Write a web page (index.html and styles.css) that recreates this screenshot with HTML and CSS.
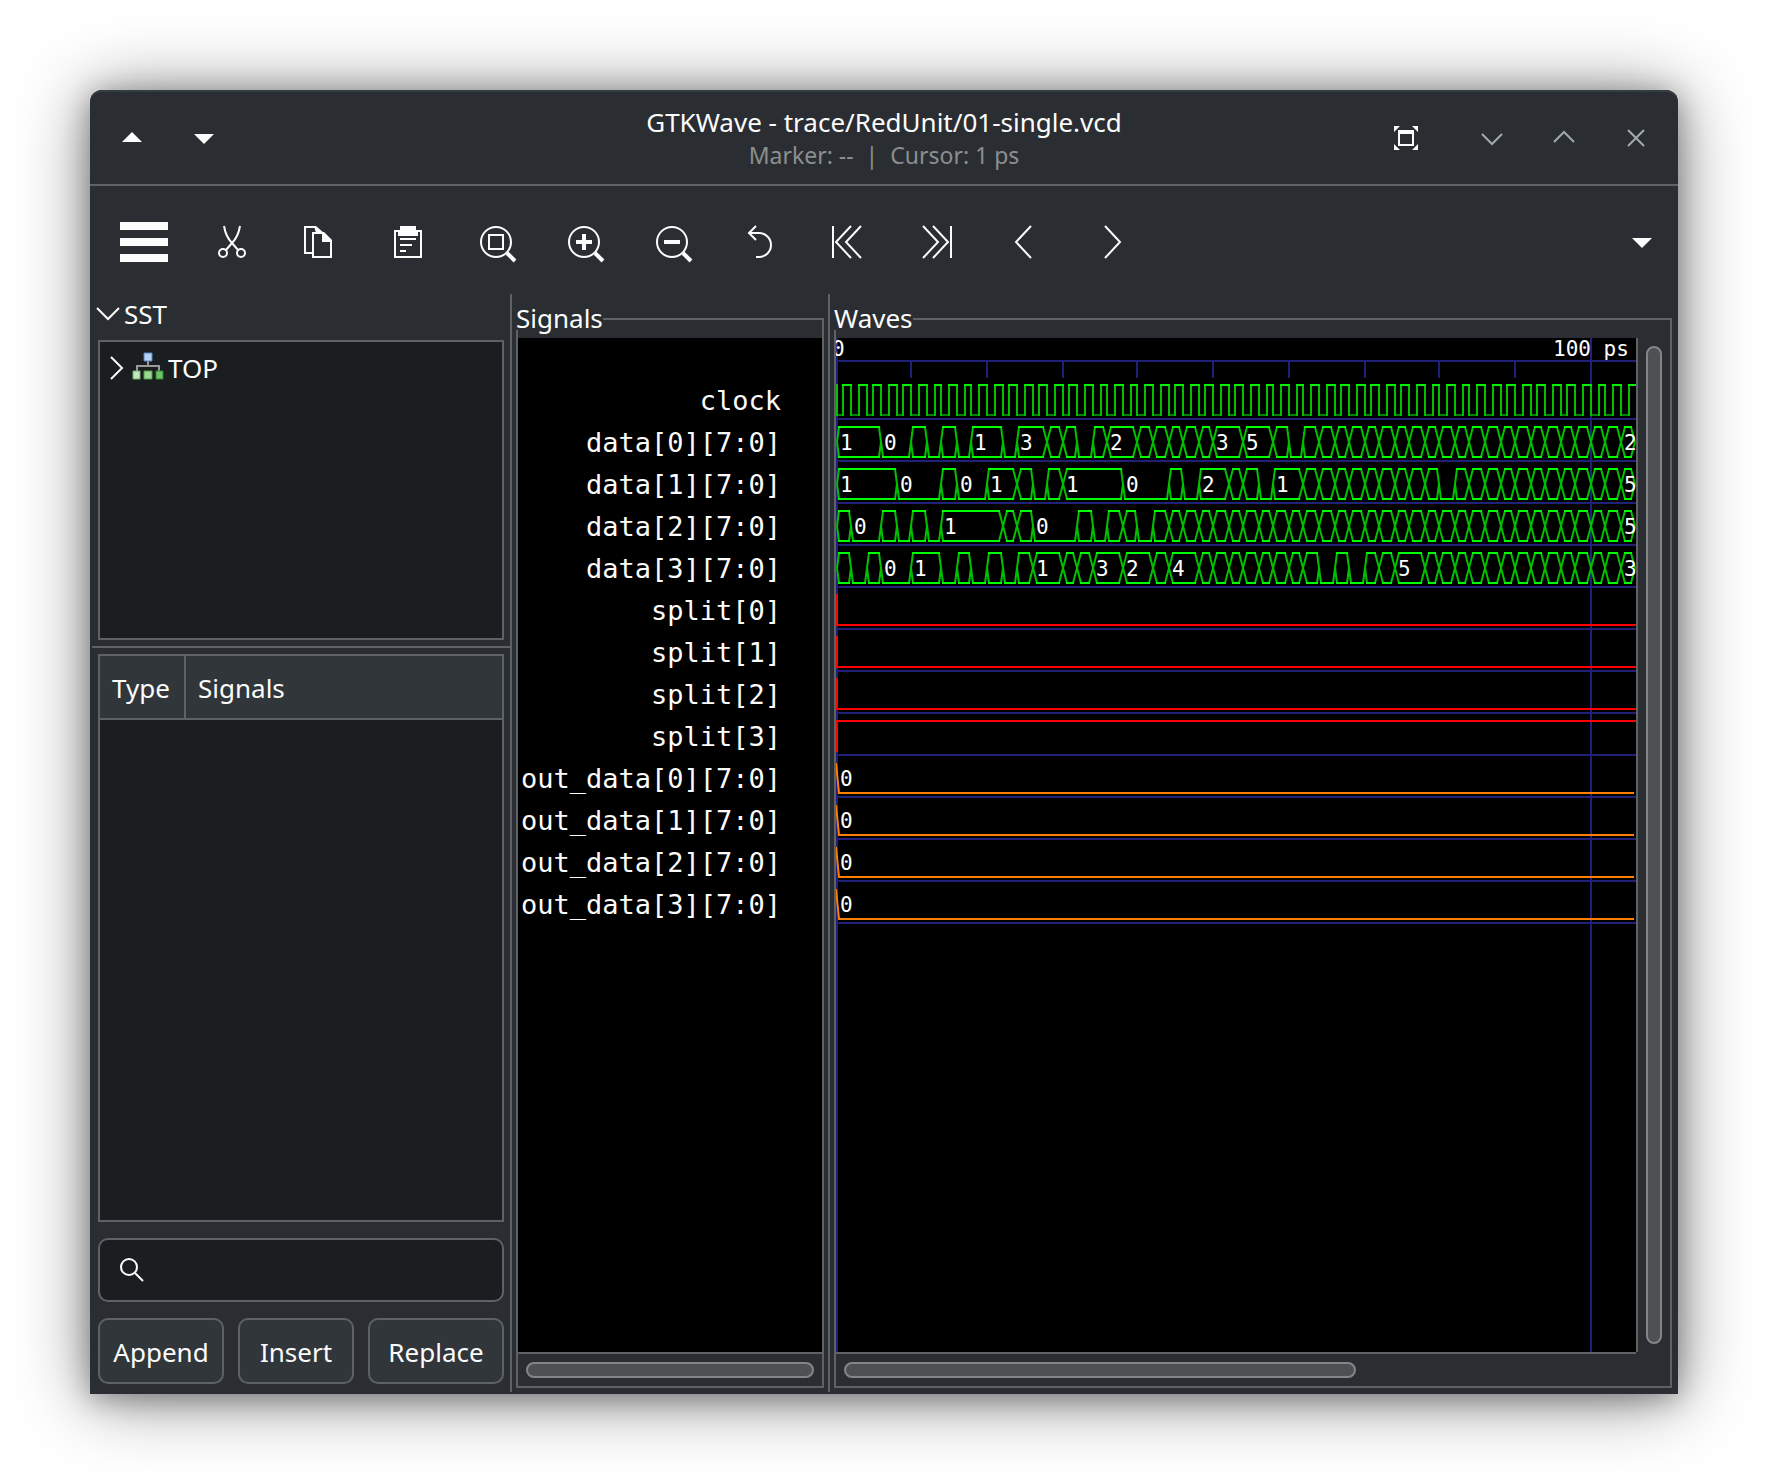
FILE: index.html
```html
<!DOCTYPE html>
<html lang="en">
<head>
<meta charset="utf-8">
<title>GTKWave - trace/RedUnit/01-single.vcd</title>
<link rel="stylesheet" href="styles.css">
</head>
<body>
<div class="window">
  <header class="titlebar">
    <div class="titlebar-side">
      <button class="win-btn" aria-label="Up"><svg class="i24" viewBox="0 0 24 24"><path class="fill" d="M2 16 12 6l10 10z"/></svg></button>
      <button class="win-btn" aria-label="Down"><svg class="i24" viewBox="0 0 24 24"><path class="fill" d="M2 8h20L12 18z"/></svg></button>
    </div>
    <div class="titles">
      <h1 class="title">GTKWave - trace/RedUnit/01-single.vcd</h1>
      <p class="subtitle">Marker: --&nbsp; |&nbsp; Cursor: 1 ps</p>
    </div>
    <div class="titlebar-side end">
      <button class="win-btn fit" aria-label="Full screen"><svg class="i24" viewBox="0 0 24 24"><path class="fill" d="M0 0h6L0 6zM24 0v6l-6-6zM0 24v-6l6 6zM24 24h-6l6-6zM4 4h16v16H4zM6 8v10h12V8z" fill-rule="evenodd"/></svg></button>
      <button class="win-btn dim" aria-label="Minimize"><svg class="i24" viewBox="0 0 24 24"><path class="line" d="m2 8 10 10L22 8"/></svg></button>
      <button class="win-btn dim" aria-label="Maximize"><svg class="i24" viewBox="0 0 24 24"><path class="line" d="m2 16 10-10 10 10"/></svg></button>
      <button class="win-btn dim" aria-label="Close"><svg class="i24" viewBox="0 0 24 24"><path class="line" d="m4 4 16 16M20 4 4 20"/></svg></button>
    </div>
  </header>

  <div class="toolbar" role="toolbar">
    <button class="tool" aria-label="Menu"><svg class="i48" viewBox="0 0 48 48"><path class="fill" d="M0 4h48v8H0zM0 20h48v8H0zM0 36h48v8H0z"/></svg></button>
    <button class="tool" aria-label="Cut"><svg class="i48" viewBox="0 0 48 48"><path class="line" d="M16 8c1 6 4 13 8 17l6 7M32 8c-1 6-4 13-8 17l-6 7"/><circle class="line" cx="15" cy="35" r="4"/><circle class="line" cx="33" cy="35" r="4"/></svg></button>
    <button class="tool" aria-label="Copy"><svg class="i48" viewBox="0 0 48 48"><path class="line" d="M16 35H9V9h11M17 15h10l8 8v16H17z"/><path class="fill" d="M18 8h2l8 7h-8zM26 14h2l8 8v2H26z"/></svg></button>
    <button class="tool" aria-label="Paste"><svg class="i48" viewBox="0 0 48 48"><path class="line" d="M14 13h-3v26h26V13h-3M16 21h16M16 27h12M16 33h6"/><path class="fill" d="M16 8h16v4h2v6H14v-6h2z"/></svg></button>
    <button class="tool" aria-label="Zoom to fit"><svg class="i48" viewBox="0 0 48 48"><circle class="line" cx="24" cy="24" r="15"/><path class="line" d="M17 17h14v14H17z"/><path class="thick" d="m35 35 8 8"/></svg></button>
    <button class="tool" aria-label="Zoom in"><svg class="i48" viewBox="0 0 48 48"><circle class="line" cx="24" cy="24" r="15"/><path class="thick" d="M16 24h16M24 16v16M35 35l8 8"/></svg></button>
    <button class="tool" aria-label="Zoom out"><svg class="i48" viewBox="0 0 48 48"><circle class="line" cx="24" cy="24" r="15"/><path class="thick" d="M16 24h16M35 35l8 8"/></svg></button>
    <button class="tool" aria-label="Undo"><svg class="i48" viewBox="0 0 48 48"><path class="line" d="m20 8-7 7 7 7M13 15h10a12 12 0 0 1 0 24h-3"/></svg></button>
    <button class="tool" aria-label="To start"><svg class="i48" viewBox="0 0 48 48"><path class="line" d="M9 8v32M27 8 12 24l15 16M37 8 22 24l15 16"/></svg></button>
    <button class="tool" aria-label="To end"><svg class="i48" viewBox="0 0 48 48"><path class="line" d="M39 8v32M11 8l15 16-15 16M21 8l15 16-15 16"/></svg></button>
    <button class="tool" aria-label="Previous edge"><svg class="i48" viewBox="0 0 48 48"><path class="line" d="M31 8 16 24l15 16"/></svg></button>
    <button class="tool" aria-label="Next edge"><svg class="i48" viewBox="0 0 48 48"><path class="line" d="m17 8 15 16-15 16"/></svg></button>
    <button class="tool more" aria-label="More tools"><svg class="i24" viewBox="0 0 24 24"><path class="fill" d="M2 8h20L12 18z"/></svg></button>
  </div>

  <main class="panes">
    <section class="sidebar">
      <button class="expander" aria-expanded="true"><svg class="i24" viewBox="0 0 24 24"><path class="line" d="M1 6l11 11L23 6"/></svg>SST</button>
      <div class="view tree" role="tree">
        <div class="tree-row" role="treeitem">
          <svg class="arrow" viewBox="0 0 16 24"><path class="line" d="m2 1 11 11L2 23"/></svg>
          <svg class="module" viewBox="0 0 32 28">
            <path d="M16 9v5M5 19v-5h22v5" fill="none" stroke="#9a9a9a" stroke-width="2"/>
            <path d="M12 1h8v8h-8z" fill="#b5d3f5" stroke="#5b84b8" stroke-width="1"/>
            <path d="M1 19h7v8H1z" fill="#c4e8bd" stroke="#6fae66" stroke-width="1"/>
            <path d="M12 19h8v8h-8z" fill="#9cd893" stroke="#4f9a48" stroke-width="1"/>
            <path d="M24 19h7v8h-7z" fill="#6fc267" stroke="#2f8a2c" stroke-width="1"/>
          </svg>
          <span>TOP</span>
        </div>
      </div>
      <div class="splitter"></div>
      <div class="view list">
        <table class="signals-table">
          <thead><tr><th class="col-type">Type</th><th>Signals</th></tr></thead>
          <tbody></tbody>
        </table>
      </div>
      <label class="search">
        <svg class="i24" viewBox="0 0 24 24"><circle class="line" cx="9" cy="9" r="8"/><path class="line" d="m15 15 8 8"/></svg>
        <input type="text" aria-label="Search signals">
      </label>
      <div class="actions">
        <button class="btn">Append</button>
        <button class="btn">Insert</button>
        <button class="btn">Replace</button>
      </div>
    </section>

    <section class="frame signals">
      <div class="frame-head"><h2 class="frame-title">Signals</h2></div>
      <div class="frame-body">
        <ul class="names">
          <li>clock</li>
          <li>data[0][7:0]</li>
          <li>data[1][7:0]</li>
          <li>data[2][7:0]</li>
          <li>data[3][7:0]</li>
          <li>split[0]</li>
          <li>split[1]</li>
          <li>split[2]</li>
          <li>split[3]</li>
          <li>out_data[0][7:0]</li>
          <li>out_data[1][7:0]</li>
          <li>out_data[2][7:0]</li>
          <li>out_data[3][7:0]</li>
        </ul>
        <div class="hscroll"><div class="thumb"></div></div>
      </div>
    </section>

    <section class="frame waves">
      <div class="frame-head"><h2 class="frame-title">Waves</h2></div>
      <div class="frame-body">
        <div class="plot"><svg id="plot" class="plot-svg"></svg></div>
        <div class="vscroll"><div class="thumb"></div></div>
        <div class="hscroll"><div class="thumb part"></div></div>
      </div>
    </section>
  </main>
</div>
<script src="waves.js"></script>
</body>
</html>
```

FILE: styles.css
```css
*, *::before, *::after { box-sizing: border-box; }

:root {
  --bg: #2a2e32;
  --view: #1b1e20;
  --raised: #31363b;
  --border: #5f6265;
  --text: #fcfcfc;
}

html, body { height: 100%; }

body {
  margin: 0;
  padding: 90px;
  background: #fff;
  color: var(--text);
  font: 26px/36px "Noto Sans", "Open Sans", sans-serif;
}

h1, h2, p, ul { margin: 0; padding: 0; font-weight: 400; }

button {
  margin: 0;
  padding: 0;
  border: 0;
  background: none;
  color: inherit;
  font: inherit;
  display: flex;
  align-items: center;
  justify-content: center;
}

svg { display: block; flex: none; }
.fill { fill: currentColor; }
.line { fill: none; stroke: currentColor; stroke-width: 2; }
.thick { fill: none; stroke: currentColor; stroke-width: 4; }
.i24 { width: 24px; height: 24px; }
.i48 { width: 48px; height: 48px; }

.window {
  display: flex;
  flex-direction: column;
  height: 100%;
  background: var(--bg);
  border-radius: 12px 12px 0 0;
  box-shadow: 0 4px 70px rgba(0, 0, 0, .5), 0 4px 28px rgba(0, 0, 0, .3);
}

/* Title bar */
.titlebar {
  display: grid;
  grid-template-columns: 1fr auto 1fr;
  height: 96px;
  flex: none;
  padding: 0 6px;
  border-top: 2px solid #343d42;
  border-bottom: 2px solid var(--border);
  border-radius: 12px 12px 0 0;
}
.titlebar-side { display: flex; }
.titlebar-side.end { justify-content: flex-end; }
.win-btn { width: 72px; }
.win-btn.fit { margin-right: 14px; }
.win-btn.dim { color: #a1a9b1; }
.titles { align-self: center; padding-bottom: 2px; text-align: center; }
.title { font-size: 26px; line-height: 36px; }
.subtitle { font-size: 23px; line-height: 30px; color: #8b8e90; }

/* Toolbar */
.toolbar {
  display: flex;
  flex: none;
  height: 108px;
  padding: 4px 0 0 10px;
}
.tool { width: 88px; }
.tool.more { width: 72px; margin-left: auto; }

/* Panes */
.panes {
  display: grid;
  grid-template-columns: 422px 318px 1fr;
  flex: 1;
  min-height: 0;
  padding-bottom: 2px;
}
.sidebar, .signals { border-right: 2px solid var(--border); }

.sidebar {
  display: flex;
  flex-direction: column;
  min-height: 0;
  padding: 0 6px 8px 8px;
}
.expander {
  justify-content: flex-start;
  gap: 4px;
  height: 46px;
  margin-left: -2px;
  padding-bottom: 6px;
}
.view { background: var(--view); border: 2px solid var(--border); }
.tree { height: 300px; }
.tree-row { display: flex; align-items: center; height: 52px; padding-left: 9px; }
.arrow { width: 16px; height: 24px; }
.module { width: 32px; height: 28px; margin: 0 4px 4px 7px; }
.splitter { height: 2px; margin: 6px -6px; background: var(--border); }
.list { flex: 1; min-height: 0; }
.signals-table { width: 100%; border-collapse: separate; border-spacing: 0; }
.signals-table th {
  height: 64px;
  padding: 2px 12px 0;
  background: var(--raised);
  border-bottom: 2px solid var(--border);
  font-weight: 400;
  text-align: left;
}
.signals-table .col-type { width: 86px; border-right: 2px solid var(--border); }

.search {
  display: flex;
  align-items: center;
  height: 64px;
  margin: 16px 0;
  padding: 0 20px;
  gap: 12px;
  background: var(--view);
  border: 2px solid var(--border);
  border-radius: 10px;
}
.search input {
  flex: 1;
  min-width: 0;
  border: 0;
  outline: 0;
  background: none;
  color: inherit;
  font: inherit;
}
.actions { display: grid; grid-template-columns: 126fr 116fr 136fr; gap: 14px; }
.btn {
  height: 66px;
  padding-top: 2px;
  background: var(--raised);
  border: 2px solid var(--border);
  border-radius: 10px;
}

/* Framed panes */
.frame { display: flex; flex-direction: column; min-width: 0; min-height: 0; padding: 7px 4px 4px; }
.waves { padding-right: 6px; }
.frame-head { display: flex; align-items: flex-end; flex: none; height: 29px; }
.frame-head::after {
  content: "";
  flex: 1;
  height: 12px;
  border: solid var(--border);
  border-width: 2px 2px 0 0;
}
.frame-title { height: 29px; font-size: 26px; line-height: 34px; }
.frame-body {
  display: grid;
  grid-template-rows: 1fr 34px;
  flex: 1;
  min-height: 0;
  padding-top: 8px;
  border: solid var(--border);
  border-width: 0 2px 2px;
}
.waves .frame-body { grid-template-columns: 1fr 34px; }

.names {
  padding: 42px 41px 0 0;
  background: #000;
  list-style: none;
  text-align: right;
  font: 27px/42px "DejaVu Sans Mono", monospace;
}
.plot { min-width: 0; min-height: 0; background: #000; overflow: hidden; }
.plot-svg { width: 100%; height: 100%; }

.hscroll { border-top: 2px solid var(--border); padding: 8px; }
.vscroll { border-left: 2px solid var(--border); padding: 8px; }
.thumb { width: 100%; height: 100%; background: #4d5154; border: 2px solid #838587; border-radius: 8px; }
.hscroll .thumb { height: 16px; }
.thumb.part { width: calc(64% + 10px); }

/* Waveforms */
.grid-line { fill: none; stroke: #202078; stroke-width: 2; }
.level-high { fill: none; stroke: #00f000; stroke-width: 2; }
.level-low { fill: none; stroke: #008200; stroke-width: 2; }
.edge { fill: none; stroke: #00c000; stroke-width: 2; }
.bus { fill: none; stroke: #00ff00; stroke-width: 2; }
.red { fill: none; stroke: #ff0000; stroke-width: 2; }
.orange { fill: none; stroke: #ff8000; stroke-width: 2; }
.value { fill: #fff; font: 21px "DejaVu Sans Mono", monospace; }
```

FILE: waves.js
```js
const svg = document.getElementById('plot');
const ROW = 42;
const END = 800;
const NS = 'http://www.w3.org/2000/svg';

// Time in ps to a pixel column, on the two-pixel grid of the plot
const at = ps => 1 + 2 * Math.floor(3.773 * ps);

function add(name, cls, attrs, text) {
  const el = document.createElementNS(NS, name);
  el.setAttribute('class', cls);
  for (const key in attrs) el.setAttribute(key, attrs[key]);
  if (text !== undefined) el.textContent = text;
  svg.append(el);
}
const path = (cls, d) => add('path', cls, { d });
const hline = (cls, y) => add('line', cls, { x1: 0, x2: '100%', y1: y, y2: y });
const label = (x, y, text) => add('text', 'value', { x, y }, text);

// Ruler and grid
hline('grid-line', 23);
for (let ps = 10; ps < 100; ps += 10) path('grid-line', `M${at(ps)} 24v16`);
for (let row = 1; row <= 13; row++) hline('grid-line', 39 + row * ROW);
for (const ps of [0, 100]) add('line', 'grid-line', { x1: at(ps), x2: at(ps), y1: 0, y2: '100%' });
label(-4, 18, '0');
label(717, 18, '100 ps');

// Clock: high from each odd ps to the next even one
let high = '', low = '', edges = 'M1 46v32';
for (let ps = 0; ps <= 105; ps++) {
  const x = at(ps), next = Math.min(at(ps + 1), END);
  if (ps % 2) high += `M${x - 1} 47H${next + 1}`;
  else low += `M${x + 1} 77H${next - 1}`;
  if (ps) edges += `M${x} 46v32`;
}
path('level-low', low);
path('edge', edges);
path('level-high', high);

// Bus values: [start step of 2 ps, value]; 'z' is an unlabelled zero, 'x' an unlabelled value
const buses = [
  '0:1 3:0 5:x 6:z 7:x 8:z 9:1 11:z 12:3 14:x 15:x 16:z 17:x 18:2 20-24:x 25:3 27:5 29:x 30:z 31-51:x 52:2',
  '0:1 4:0 7:x 8:0 10:1 12:x 13:z 14:x 15:1 19:0 22:x 23:z 24:2 26:x 27:x 28:z 29:1 31-39:x 40:z 41-51:x 52:5',
  '0:x 1:0 3:x 4:z 5:x 6:z 7:1 11:x 12:x 13:0 16:x 17:z 18:x 19:x 20:z 21-51:x 52:5',
  '0:x 1:z 2:x 3:0 5:1 7:z 8:x 9:z 10:x 11:z 12:x 13:1 15:x 16:x 17:3 19:2 21:x 22:4 24-31:x 32:z 33:x 34:z 35:x 36:x 37:5 39-51:x 52:3'
];

buses.forEach((text, index) => {
  const steps = [];
  for (const item of text.split(' ')) {
    const [range, value] = item.split(':');
    const [from, to = from] = range.split('-').map(Number);
    for (let k = from; k <= to; k++) steps.push({ x: at(2 * k), value, zero: value === 'z' || value === '0' });
  }
  steps.push({ x: at(106), zero: false });
  const mid = 62 + (index + 1) * ROW, top = mid - 15, bottom = mid + 15;
  const half = i => (i === 0 || steps[i].zero || steps[i - 1].zero ? 2 : 4);
  let flat = '', slopes = '';
  for (let i = 0; i < steps.length - 1; i++) {
    const { x, zero } = steps[i], end = steps[i + 1].x;
    const a = x + half(i), b = end - half(i + 1);
    flat += `M${a - 1} ${bottom}H${b + 1}`;
    slopes += `M${x} ${mid}L${a} ${bottom}M${end} ${mid}L${b} ${bottom}`;
    if (!zero) {
      flat += `M${a - 1} ${top}H${b + 1}`;
      slopes += `M${x} ${mid}L${a} ${top}M${end} ${mid}L${b} ${top}`;
    }
  }
  path('edge', slopes);
  path('bus', flat);
  for (const { x, value } of steps) if (/\d/.test(value)) label(x + 3, mid + 8, value);
});

// Split flags
[0, 0, 0, 1].forEach((level, index) => {
  const y = 46 + (index + 5) * ROW;
  path('red', `M1 ${y}v32`);
  hline('red', level ? y + 1 : y + 31);
});

// Output buses hold zero throughout
for (let index = 0; index < 4; index++) {
  const y = 47 + (index + 9) * ROW;
  path('orange', `M0 ${y}L3 ${y + 30}H${END - 2}`);
  label(4, y + 23, '0');
}
```
